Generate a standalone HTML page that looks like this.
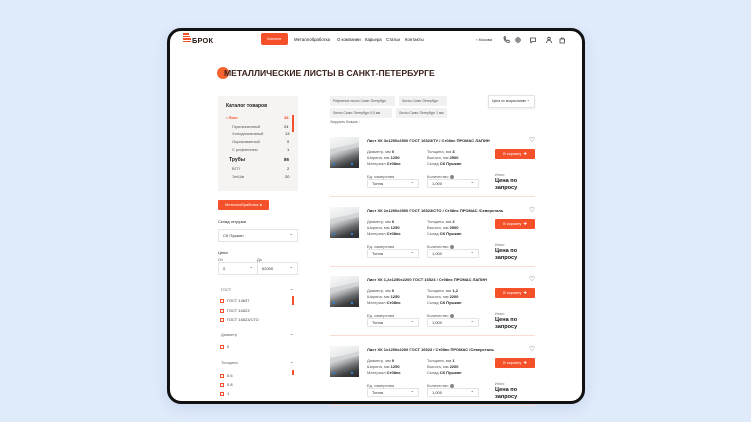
<!DOCTYPE html>
<html><head><meta charset="utf-8">
<style>
*{margin:0;padding:0;box-sizing:border-box}
body{width:751px;height:422px;background:#dfeafa;font-family:"Liberation Sans",sans-serif;position:relative;overflow:hidden;color:#222}
.frame{position:absolute;left:167px;top:28px;width:418px;height:376px;border:3px solid #111;border-radius:14px;background:#fff;overflow:hidden;box-shadow:0 4px 12px rgba(80,120,180,.15)}
.a{position:absolute;white-space:nowrap}
.t4{font-size:4px;line-height:5px}
.t45{font-size:4.3px;line-height:5px}
.or{color:#f4502a}
.chip{position:absolute;background:#f1f1f1;height:10px;font-size:3.3px;line-height:10px;padding:0 3px;color:#555;border-radius:1px;overflow:hidden;white-space:nowrap}
.sel{position:absolute;border:1px solid #e3e3e3;background:#fff;font-size:4px;line-height:8px;padding-left:4px;color:#333;border-radius:1px}
.sel:after{content:"⌄";position:absolute;right:4px;top:-2px;font-size:4px}
.cb{position:absolute;width:4px;height:4px;border:0.8px solid #f4502a}
.btn{position:absolute;background:#f4502a;color:#fff;font-size:4px;text-align:center;border-radius:1px}
.img{position:absolute;width:29px;height:31px;background:linear-gradient(160deg,#fafafa 0%,#e6e8e9 35%,#a9acae 52%,#6c6f71 66%,#3a3c3e 82%,#2a2b2c 100%)}
.img:before{content:"";position:absolute;left:0;top:9px;width:29px;height:4px;background:#d2d4d5;transform:skewY(-12deg)}
.img:after{content:"";position:absolute;left:3px;bottom:3px;width:2px;height:2px;background:#2a7fd0;box-shadow:18px 0 #2a7fd0}
.div{position:absolute;left:330px;width:205px;height:1px;background:#fbdcd2}
</style></head><body>
<div class="frame"></div>

<!-- header -->
<div class="a" style="left:183px;top:33px;width:8px;height:10px">
<div style="height:1.5px;background:#f4502a;margin-bottom:1px;width:6px"></div>
<div style="height:1.5px;background:#f4502a;margin-bottom:1px;width:7px"></div>
<div style="height:1.5px;background:#f4502a;margin-bottom:1px;width:8px"></div>
<div style="height:1.5px;background:#f4502a;width:8px"></div>
</div>
<div class="a" style="left:192px;top:36px;font-size:7.4px;font-weight:bold;color:#2a1a16;letter-spacing:.2px">БРОК</div>
<div class="btn" style="left:261px;top:33px;width:27px;height:12px;line-height:12px;border-radius:2px">Каталог</div>
<div class="a t45" style="left:294px;top:37px;color:#111">Металлобработка</div>
<div class="a t45" style="left:337px;top:37px;color:#111">О компании</div>
<div class="a t45" style="left:365px;top:37px;color:#111">Карьера</div>
<div class="a t45" style="left:386px;top:37px;color:#111">Статьи</div>
<div class="a t45" style="left:405px;top:37px;color:#111">Контакты</div>
<div class="a t4" style="left:476px;top:37px;color:#333">‹ Москва</div>
<svg class="a" style="left:503px;top:36px" width="66" height="8" viewBox="0 0 66 8" fill="none" stroke="#444" stroke-width=".8">
<path d="M1 1.5c0 3 2 5 5 5l.5-1.5-1.5-1-1 .7c-1-.5-1.6-1.2-2-2l.7-1-1-1.5z"/>
<circle cx="15" cy="4" r="2.3"/><circle cx="15" cy="4" r="1"/>
<path d="M27.5 2h5v3.5h-3l-1.5 1.2V5.5h-.5z"/>
<circle cx="46" cy="2.5" r="1.3"/><path d="M43.5 7c0-1.8 1.2-2.7 2.5-2.7s2.5.9 2.5 2.7"/>
<path d="M57 3h4.5v4H57zM58 3c0-1.5 2.5-1.5 2.5 0"/>
</svg>

<!-- title -->
<div class="a" style="left:217px;top:67px;width:12px;height:12px;border-radius:50%;background:#f4622e"></div>
<div class="a" style="left:224px;top:68px;font-size:8.6px;font-weight:bold;color:#3b211b;line-height:10px">МЕТАЛЛИЧЕСКИЕ ЛИСТЫ В САНКТ-ПЕТЕРБУРГЕ</div>

<!-- sidebar -->
<div class="a" style="left:218px;top:96px;width:80px;height:95px;background:#f5f4f2"></div>
<div class="a" style="left:226px;top:103px;font-size:5px;font-weight:bold;color:#222">Каталог товаров</div>
<div class="a t4 or" style="left:226px;top:115px;font-weight:bold">• Лист</div><div class="a t4 or" style="left:284px;top:115px;font-weight:bold">38</div>
<div class="a" style="left:292px;top:115px;width:1.5px;height:17px;background:#f4502a"></div>
<div class="a t4" style="left:232px;top:124px;color:#555">Горячекатаный</div><div class="a t4" style="left:284px;top:124px">24</div>
<div class="a t4" style="left:232px;top:131px;color:#555">Холоднокатаный</div><div class="a t4" style="left:285px;top:131px">13</div>
<div class="a t4" style="left:232px;top:139px;color:#555">Оцинкованный</div><div class="a t4" style="left:287px;top:139px">0</div>
<div class="a t4" style="left:232px;top:147px;color:#555">С рифлением</div><div class="a t4" style="left:287px;top:147px">1</div>
<div class="a" style="left:229px;top:157px;font-size:5px;font-weight:bold">Трубы</div><div class="a" style="left:284px;top:157px;font-size:4.4px;font-weight:bold">86</div>
<div class="a t4" style="left:232px;top:166px;color:#555">ВГП</div><div class="a t4" style="left:287px;top:166px">2</div>
<div class="a t4" style="left:232px;top:174px;color:#555">Эл/Шв</div><div class="a t4" style="left:285px;top:174px">20</div>

<div class="btn" style="left:218px;top:200px;width:51px;height:10px;line-height:10px">Металлобработка ●</div>
<div class="a t4" style="left:218px;top:219px">Склад отгрузки</div>
<div class="sel" style="left:218px;top:229px;width:80px;height:13px;line-height:11px">СК Пушкин</div>
<div class="a t4" style="left:218px;top:250px">Цена</div>
<div class="a t4" style="left:218px;top:257px;color:#555">От</div>
<div class="a t4" style="left:257px;top:257px;color:#555">До</div>
<div class="sel" style="left:218px;top:262px;width:40px;height:13px;line-height:11px">0</div>
<div class="sel" style="left:257px;top:262px;width:41px;height:13px;line-height:11px">62000</div>

<div class="a t4" style="left:221px;top:287px;color:#666">ГОСТ</div><div class="a t4" style="left:290px;top:286px">⌄</div>
<div class="a" style="left:292px;top:296px;width:1.5px;height:9px;background:#f4502a"></div>
<div class="cb" style="left:220px;top:299px"></div><div class="a t4" style="left:227px;top:298px;color:#444">ГОСТ 14637</div>
<div class="cb" style="left:220px;top:309px"></div><div class="a t4" style="left:227px;top:308px;color:#444">ГОСТ 16523</div>
<div class="cb" style="left:220px;top:318px"></div><div class="a t4" style="left:227px;top:317px;color:#444">ГОСТ 16523/СТО</div>
<div class="a t4" style="left:221px;top:332px;color:#666">Диаметр</div><div class="a t4" style="left:290px;top:331px">⌄</div>
<div class="cb" style="left:220px;top:345px"></div><div class="a t4" style="left:227px;top:344px;color:#444">0</div>
<div class="a t4" style="left:221px;top:360px;color:#666">Толщина</div><div class="a t4" style="left:290px;top:359px">⌄</div>
<div class="a" style="left:292px;top:370px;width:1.5px;height:5px;background:#f4502a"></div>
<div class="cb" style="left:220px;top:374px"></div><div class="a t4" style="left:227px;top:373px;color:#444">0.6</div>
<div class="cb" style="left:220px;top:383px"></div><div class="a t4" style="left:227px;top:382px;color:#444">0.8</div>
<div class="cb" style="left:220px;top:392px"></div><div class="a t4" style="left:227px;top:391px;color:#444">1</div>

<!-- chips -->
<div class="chip" style="left:330px;top:96px;width:65px">Рифленые листы Санкт-Петербург</div>
<div class="chip" style="left:399px;top:96px;width:48px">Листы Санкт-Петербург</div>
<div class="chip" style="left:330px;top:108px;width:62px">Листы Санкт-Петербург 0,5 мм</div>
<div class="chip" style="left:396px;top:108px;width:51px">Листы Санкт-Петербург 1 мм</div>
<div class="a" style="left:330px;top:120px;font-size:3.3px;color:#555">Загрузить больше <span class="or">↓</span></div>
<div class="sel" style="left:488px;top:95px;width:47px;height:13px;line-height:11px;padding-left:3px;font-size:3.4px;box-shadow:0 1px 2px rgba(0,0,0,.08)">Цена по возрастанию</div>

<!-- products -->
<div id="p"></div>
<script>
var titles=["Лист ХК 3х1250х2500 ГОСТ 16523/ТУ / Ст08пс ПРОМАС ЛАПИН","Лист ХК 2х1250х2500 ГОСТ 16523/СТО / Ст08пс ПРОМАС /Северсталь","Лист ХК 1,2х1250х2200 ГОСТ 16523 / Ст08пс ПРОМАС ЛАПИН","Лист ХК 1х1250х2200 ГОСТ 16523 / Ст08пс ПРОМАС /Северсталь"];
var th=["3","2","1,2","1"],hh=["2500","2500","2200","2200"];
var h="";
for(var i=0;i<4;i++){var y=Math.round(134+i*69.7);
h+='<div class="img" style="left:330px;top:'+(y+3)+'px"></div>';
h+='<div class="a" style="left:367px;top:'+(y+4)+'px;font-size:4px;font-weight:bold;color:#222">'+titles[i]+'</div>';
h+='<div class="a" style="left:529px;top:'+(y+2)+'px;font-size:7px;color:#444">♡</div>';
h+='<div class="a t4" style="left:367px;top:'+(y+15)+'px;color:#555">Диаметр, мм <b style="color:#222">0</b></div>';
h+='<div class="a t4" style="left:367px;top:'+(y+21)+'px;color:#555">Ширина, мм <b style="color:#222">1250</b></div>';
h+='<div class="a t4" style="left:367px;top:'+(y+27)+'px;color:#555">Материал <b style="color:#222">Ст08пс</b></div>';
h+='<div class="a t4" style="left:427px;top:'+(y+15)+'px;color:#555">Толщина, мм <b style="color:#222">'+th[i]+'</b></div>';
h+='<div class="a t4" style="left:427px;top:'+(y+21)+'px;color:#555">Высота, мм <b style="color:#222">'+hh[i]+'</b></div>';
h+='<div class="a t4" style="left:427px;top:'+(y+27)+'px;color:#555">Склад <b style="color:#222">СК Пушкин</b></div>';
h+='<div class="btn" style="left:495px;top:'+(y+15)+'px;width:40px;height:10px;line-height:10px">В корзину &nbsp;✚</div>';
h+='<div class="a t4" style="left:367px;top:'+(y+40)+'px;color:#555">Ед. измерения</div>';
h+='<div class="a t4" style="left:427px;top:'+(y+40)+'px;color:#555">Количество <span style="display:inline-block;width:4px;height:4px;border-radius:50%;background:#888;vertical-align:middle"></span></div>';
h+='<div class="sel" style="left:367px;top:'+(y+45)+'px;width:52px;height:9px">Тонна</div>';
h+='<div class="sel" style="left:427px;top:'+(y+45)+'px;width:52px;height:9px">1,000</div>';
h+='<div class="a" style="left:495px;top:'+(y+39)+'px;font-size:3.6px;color:#666">Итого</div>';
h+='<div class="a" style="left:495px;top:'+(y+44)+'px;font-size:5.6px;font-weight:bold;line-height:7px;color:#111">Цена по<br>запросу</div>';
h+='<div class="div" style="top:'+(y+62)+'px"></div>';}
document.getElementById("p").innerHTML=h;
</script>
</body></html>
